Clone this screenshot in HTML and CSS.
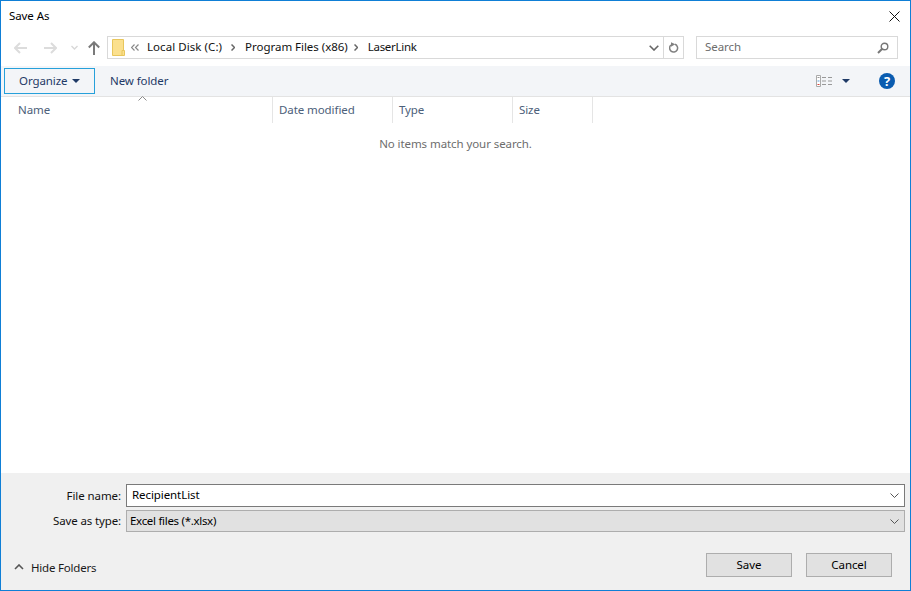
FILE: index.html
```html
<!DOCTYPE html>
<html lang="en">
<head>
<meta charset="utf-8">
<title>Save As</title>
<link rel="stylesheet" href="styles.css">
</head>
<body>
<div class="dialog">
  <header class="titlebar">
    <span class="title">Save As</span>
    <svg class="close" width="11" height="11" viewBox="0 0 11 11"><path d="M.5.5l10 10M10.500.5l-10 10" stroke="#111" stroke-width="1" fill="none"/></svg>
  </header>
  <div class="navrow">
    <div class="navbtns">
      <svg width="13" height="12" viewBox="0 0 13 12"><path d="M6 1L1 6l5 5M1 6h12" stroke="#dcdcdc" stroke-width="2" fill="none"/></svg>
      <svg width="13" height="12" viewBox="0 0 13 12"><path d="M7 1l5 5-5 5M12 6H0" stroke="#dcdcdc" stroke-width="2" fill="none"/></svg>
      <svg width="7" height="5" viewBox="0 0 7 5"><path d="M.5 1l3 3 3-3" stroke="#d8d8d8" stroke-width="1.400" fill="none"/></svg>
      <svg width="12" height="14" viewBox="0 0 12 14"><path d="M.8 6.500L6 1.300l5.200 5.200M6 2v12" stroke="#7a7a7a" stroke-width="2" fill="none"/></svg>
    </div>
    <div class="address">
      <svg class="folder" width="13" height="17" viewBox="0 0 13 17"><path d="M.5.500h11v16H.5z" fill="#fbe08e" stroke="#e8c65c"/><path d="M10 11.500h2.500v5H10z" fill="#fbe08e" stroke="#e8c65c"/></svg>
      <svg class="chev-dbl" width="8" height="7" viewBox="0 0 8 7"><path d="M3.500.500l-3 3 3 3M7.500.500l-3 3 3 3" stroke="#888" stroke-width="1.200" fill="none"/></svg>
      <span class="crumb crumb-disk">Local Disk (C:)</span>
      <svg class="sep" width="4" height="7" viewBox="0 0 4 7"><path d="M.5.500l3 3-3 3" stroke="#666" stroke-width="1.500" fill="none"/></svg>
      <span class="crumb crumb-program">Program Files (x86)</span>
      <svg class="sep sep-last" width="4" height="7" viewBox="0 0 4 7"><path d="M.5.500l3 3-3 3" stroke="#666" stroke-width="1.500" fill="none"/></svg>
      <span class="crumb crumb-last">LaserLink</span>
      <span class="spacer"></span>
      <svg class="addr-down" width="10" height="6" viewBox="0 0 10 6"><path d="M.7.700L5 5 9.300.700" stroke="#666" stroke-width="1.600" fill="none"/></svg>
      <span class="addr-refresh">
        <svg width="10" height="12" viewBox="0 0 10 12"><path d="M6 2.300A4 4 0 1 1 2 3" stroke="#808080" stroke-width="1.500" fill="none"/><path d="M2 .2v4.600L6.400 2.300z" fill="#808080"/></svg>
      </span>
    </div>
    <div class="search">
      <span class="search-label">Search</span>
      <svg width="12" height="12" viewBox="0 0 12 12"><circle cx="7.500" cy="4.500" r="3.300" fill="none" stroke="#777" stroke-width="1.400"/><path d="M5 7l-4 4" stroke="#777" stroke-width="2"/></svg>
    </div>
  </div>
  <div class="toolbar">
    <div class="organize">Organize<span class="caret"></span></div>
    <div class="newfolder">New folder</div>
    <span class="spacer"></span>
    <svg class="views" width="17" height="12" viewBox="0 0 17 12"><path d="M.5.500h4v11h-4z" fill="#fff" stroke="#aaa"/><path d="M1.500 2h2v1h-2z" fill="#999"/><path d="M1.500 5.500h2v1h-2z" fill="#5b9bd5"/><path d="M1.500 9h2v1h-2z" fill="#d9433a"/><path d="M6 2.500h4M12 2.500h4M6 6h4M12 6h4M6 9.500h4M12 9.500h4" stroke="#999"/></svg>
    <span class="caret views-caret"></span>
    <span class="help">?</span>
  </div>
  <div class="headers">
    <div class="col col-name">Name<span class="sort"><svg width="9" height="5" viewBox="0 0 9 5"><path d="M.5 4.500l4-4 4 4" stroke="#8a8a8a" fill="none"/></svg></span></div>
    <div class="col col-date">Date modified</div>
    <div class="col col-type">Type</div>
    <div class="col col-size">Size</div>
  </div>
  <main class="list">No items match your search.</main>
  <footer class="footer">
    <div class="form">
      <label class="form-label">File name:</label>
      <div class="field field-name"><span>RecipientList</span><svg width="9" height="5" viewBox="0 0 9 5"><path d="M.5.500l4 4 4-4" stroke="#555" fill="none"/></svg></div>
      <label class="form-label form-label-type">Save as type:</label>
      <div class="field field-type"><span>Excel files (*.xlsx)</span><svg width="9" height="5" viewBox="0 0 9 5"><path d="M.5.500l4 4 4-4" stroke="#555" fill="none"/></svg></div>
    </div>
    <div class="actions">
      <div class="hide"><svg width="10" height="6" viewBox="0 0 10 6"><path d="M1 5l4-4 4 4" stroke="#555" stroke-width="1.600" fill="none"/></svg>Hide Folders</div>
      <span class="spacer"></span>
      <div class="btn">Save</div>
      <div class="btn">Cancel</div>
    </div>
  </footer>
</div>
</body>
</html>
```
FILE: styles.css
```css
* { box-sizing: border-box; }
html, body { margin: 0; height: 100%; }
body {
  width: 911px;
  height: 591px;
  overflow: hidden;
  background: #fff;
  font-family: "Noto Sans", "Open Sans", sans-serif;
  font-size: 11.5px;
  letter-spacing: -0.08px;
  color: #1a1a1a;
}
.dialog {
  width: 911px;
  height: 591px;
  border: 1px solid #0f7fd6;
  display: flex;
  flex-direction: column;
}
.spacer { flex: 1; }
.titlebar {
  height: 30px;
  flex: none;
  display: flex;
  align-items: center;
  justify-content: space-between;
  padding: 0 10px 0 8px;
}
.title { color: #000; margin-bottom: 2px; }
.navrow {
  height: 35px;
  display: flex;
  align-items: center;
  padding: 0 12px 2px 0;
  flex: none;
}
.navbtns {
  width: 106px;
  flex: none;
  display: flex;
  align-items: center;
  padding-left: 13px;
  gap: 17px;
}
.navbtns svg:nth-child(3) { margin-left: -3px; margin-right: -7px; }
.address {
  width: 577px;
  height: 23px;
  flex: none;
  border: 1px solid #d9d9d9;
  display: flex;
  align-items: center;
  padding-left: 4px;
  color: #111;
}
.chev-dbl { margin: 0 8px 0 6px; }
.crumb { margin-bottom: 2px; }
.crumb-disk { letter-spacing: 0.06px; }
.crumb-program { letter-spacing: -0.03px; }
.crumb-last { letter-spacing: -0.3px; }
.sep { margin: 0 10px 0 9px; }
.sep-last { margin-left: 6px; }
.addr-down { margin-right: 4px; }
.addr-refresh {
  width: 20px;
  height: 21px;
  border-left: 1px solid #d9d9d9;
  display: flex;
  align-items: center;
  justify-content: center;
}
.search {
  width: 202px;
  height: 23px;
  flex: none;
  margin-left: 12px;
  border: 1px solid #d9d9d9;
  display: flex;
  align-items: center;
  justify-content: space-between;
  padding: 0 8px;
  color: #6d6d6d;
}
.search-label { margin-bottom: 2px; }
.toolbar {
  height: 31px;
  flex: none;
  background: #f3f5f8;
  border-bottom: 1px solid #e3e3e3;
  display: flex;
  align-items: center;
  padding: 0 15px 0 3px;
  color: #1f3a66;
}
.organize {
  width: 91px;
  height: 26px;
  border: 1px solid #26a0da;
  display: flex;
  align-items: center;
  padding: 0 0 1px 14px;
}
.caret {
  display: inline-block;
  width: 0;
  height: 0;
  margin: 1px 0 0 5px;
  border-left: 4px solid transparent;
  border-right: 4px solid transparent;
  border-top: 4px solid #1f3a66;
}
.newfolder { margin: 0 0 1px 15px; }
.views-caret { margin: 0 29px 0 9px; }
.help {
  width: 16px;
  height: 16px;
  border-radius: 50%;
  background: #0a5cb0;
  color: #fff;
  font-weight: 700;
  font-size: 13px;
  line-height: 16px;
  text-align: center;
}
.headers {
  height: 26px;
  flex: none;
  display: flex;
  color: #4c607a;
}
.col {
  height: 26px;
  padding: 5px 0 0 6px;
  border-right: 1px solid #e5e5e5;
  position: relative;
}
.col-name { width: 272px; padding-left: 17px; }
.col-date, .col-type { width: 120px; }
.col-size { width: 80px; }
.sort { position: absolute; left: 137px; top: -1px; line-height: 0; }
.list {
  flex: 1;
  padding-top: 13px;
  text-align: center;
  color: #6d6d6d;
}
.footer {
  height: 117px;
  flex: none;
  background: #f0f0f0;
  padding: 11px 5px 0 0;
}
.form {
  display: grid;
  grid-template-columns: 120px 1fr;
  column-gap: 5px;
  row-gap: 3px;
}
.form-label { text-align: right; align-self: center; color: #111; margin-bottom: 1px; }
.form-label-type { letter-spacing: -0.13px; }
.field {
  height: 23px;
  border: 1px solid #7a7a7a;
  display: flex;
  align-items: center;
  justify-content: space-between;
  padding: 0 5px;
  background: #fff;
  color: #000;
}
.field span { margin-bottom: 2px; }
.field-type {
  height: 22px;
  background: #e1e1e1;
  border-color: #adadad;
  padding-left: 3px;
  letter-spacing: -0.3px;
}
.actions {
  display: flex;
  align-items: center;
  margin-top: 21px;
  padding-right: 13px;
}
.hide {
  display: flex;
  align-items: center;
  gap: 7px;
  margin: 4px 0 0 13px;
  letter-spacing: -0.2px;
}
.btn {
  width: 86px;
  height: 24px;
  margin-left: 14px;
  background: #e1e1e1;
  border: 1px solid #adadad;
  display: flex;
  align-items: center;
  justify-content: center;
  color: #000;
  padding-bottom: 2px;
}
```
